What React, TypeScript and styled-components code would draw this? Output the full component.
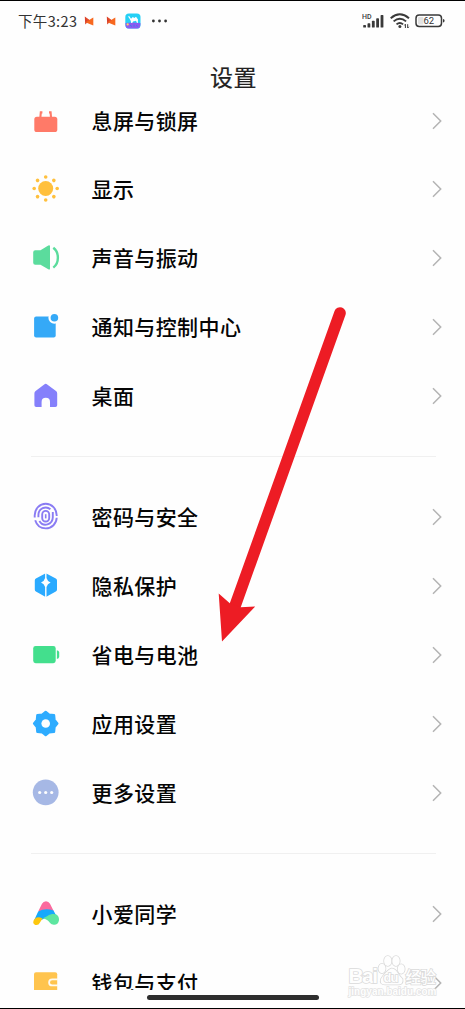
import React from 'react';
import styled, { createGlobalStyle } from 'styled-components';

const GlobalStyle = createGlobalStyle`
  * { box-sizing: border-box; }
  body { margin: 0; background: #fefefe; }
`;

const Screen = styled.div`
  position: relative;
  display: flex;
  flex-direction: column;
  width: 465px;
  height: 1009px;
  overflow: hidden;
  background: #fefefe;
  border-top: 1px solid #000;
  border-bottom: 1px solid #000;
  font-family: 'Noto Sans CJK SC', 'Liberation Sans', sans-serif;
  color: #050505;
`;

const StatusBar = styled.header`
  display: flex;
  align-items: center;
  justify-content: space-between;
  flex: none;
  height: 40px;
  padding: 0 20px 0 18px;
`;

const StatusGroup = styled.div<{ $gap: number }>`
  display: flex;
  align-items: center;
  gap: ${(p) => p.$gap}px;
`;

const Clock = styled.span`
  width: 60px;
  font-size: 14.5px;
  line-height: 20px;
  letter-spacing: 0.35px;
  white-space: nowrap;
  color: #333;
`;

const Title = styled.h1`
  flex: none;
  height: 70px;
  margin: 0;
  padding: 18px 0 0 2px;
  font-size: 23px;
  line-height: 34px;
  font-weight: 400;
  letter-spacing: 0.6px;
  text-align: center;
  color: #222;
  -webkit-text-stroke: 0.2px #222;
`;

const Viewport = styled.main`
  flex: none;
  height: 879px;
  overflow: hidden;
`;

const Group = styled.section<{ $first?: boolean }>`
  margin-top: ${(p) => (p.$first ? '-24.9px' : '0')};
`;

const Row = styled.div`
  display: flex;
  align-items: center;
  height: 68.9px;
  padding: 0 22px 0 31px;
`;

const Label = styled.span`
  flex: 1;
  margin-left: 30.5px;
  padding-bottom: 2px;
  font-size: 21px;
  line-height: 30px;
  font-weight: 500;
  letter-spacing: 0.4px;
`;

const Divider = styled.hr`
  height: 1px;
  margin: 25.3px 29px 26px 31px;
  border: 0;
  background: #f0f0f0;
`;

const HomeBar = styled.div`
  position: absolute;
  left: 147px;
  bottom: 8px;
  width: 172px;
  height: 5px;
  border-radius: 3px;
  background: #2e2e2e;
`;

const ArrowOverlay = styled.svg`
  position: absolute;
  left: 210px;
  top: 299px;
`;

const Watermark = styled.svg`
  position: absolute;
  left: 340px;
  top: 949px;
`;

const Icon = ({ children }: { children: React.ReactNode }) => (
  <svg width="30" height="30" viewBox="0 0 30 30" fill="none">
    {children}
  </svg>
);

const Chevron = () => (
  <svg width="12" height="18" viewBox="0 0 12 18" fill="none">
    <path d="M2 1.2 9.7 9 2 16.8" stroke="#b4b4b4" strokeWidth="1.5" />
  </svg>
);

const icons = {
  lock: (
    <Icon>
      <rect x="3.3" y="10.8" width="23" height="15.2" rx="2.6" fill="#ff7a68" />
      <path d="M11.4 6.4H9.8L9.4 11M18 6.4H19.6L20 11" stroke="#ff7a68" strokeWidth="2.1" />
    </Icon>
  ),
  sun: (
    <Icon>
      <g fill="#ffc03d">
        <circle cx="14.7" cy="14.5" r="7.5" />
        {[0, 45, 90, 135, 180, 225, 270, 315].map((a) => (
          <circle key={a} cx="14.7" cy="3" r="1.8" transform={`rotate(${a} 14.7 14.5)`} />
        ))}
      </g>
    </Icon>
  ),
  sound: (
    <Icon>
      <path d="M4.2 7.2H9.5L17.3 2.6Q19 1.8 19 3.6V25.4Q19 27.2 17.3 26.3L9.5 21.8H4.2Q2.2 21.8 2.2 19.8V9.2Q2.2 7.2 4.2 7.2Z" fill="#5bdc9d" />
      <path d="M22.3 4.8C28.4 9.4 28.4 20 22.3 24.6" stroke="#5bdc9d" strokeWidth="2.4" />
    </Icon>
  ),
  notice: (
    <Icon>
      <rect x="3.1" y="4.6" width="21.6" height="21" rx="2" fill="#35a9f7" />
      <circle cx="23.4" cy="5.8" r="6" fill="#fefefe" />
      <circle cx="23.4" cy="5.8" r="3.8" fill="#35a9f7" />
    </Icon>
  ),
  home: (
    <Icon>
      <path d="M13.2 3.4Q14.7 2.2 16.2 3.4L25 10Q26.2 11 26.2 12.4V24.2Q26.2 26 24.4 26H19V21Q19 16.8 14.8 16.8T10.6 21V26H5.2Q3.4 26 3.4 24.2V12.4Q3.4 11 4.6 10Z" fill="#8580fb" />
    </Icon>
  ),
  finger: (
    <Icon>
      <g stroke="#8a7cf3" strokeWidth="1.9">
        <path d="M3.7 15.5V13.2A11 11.4 0 0 1 25.7 13.2V14" />
        <path d="M4.2 18.2C6 24 10 26.4 14.7 26.4C21 26.4 25.5 21.5 25.7 15.8" />
        <path d="M7.4 15.2V13A7.3 7.6 0 0 1 19.4 7.3" />
        <path d="M21.8 10V15.3A7.2 7.4 0 0 1 8.4 19" />
        <rect x="11.2" y="8.9" width="7" height="10.6" rx="3.5" />
        <path d="M14.7 12.2V16.4" strokeWidth="1.6" />
      </g>
    </Icon>
  ),
  privacy: (
    <Icon>
      <path d="M13.8 2.8Q14.8 2.2 15.8 2.8L24.8 7.4Q26 8.1 26 9.4V18.6Q26 20 24.8 20.6L15.8 25.4Q14.8 26 13.8 25.4L4.9 20.6Q3.8 20 3.8 18.6V9.4Q3.8 8.1 4.9 7.4Z" fill="#2aaaff" />
      <path d="M14.1 1.8H15.5V7Q16.4 10.4 19.6 11.6Q16.4 12.8 15.5 16V26.5H14.1V16Q13.2 12.8 10 11.6Q13.2 10.4 14.1 7Z" fill="#fefefe" />
    </Icon>
  ),
  battery: (
    <Icon>
      <rect x="2.2" y="6" width="22.5" height="17.2" rx="2.4" fill="#43df8d" />
      <path d="M25.9 10.2Q28.2 10.6 28.2 12.5V16.7Q28.2 18.6 25.9 19Z" fill="#43df8d" />
    </Icon>
  ),
  gear: (
    <Icon>
      <path
        d="M14.7 2.9 18.1 5.7 23 6.2 23.5 11.1 26.3 14.5 23.5 17.9 23 22.8 18.1 23.3 14.7 26.1 11.3 23.3 6.4 22.8 5.9 17.9 3.1 14.5 5.9 11.1 6.4 6.2 11.3 5.7Z"
        fill="#2eacff"
        stroke="#2eacff"
        strokeWidth="2.4"
        strokeLinejoin="round"
      />
      <circle cx="14.7" cy="14.5" r="4.3" fill="#fefefe" />
    </Icon>
  ),
  more: (
    <Icon>
      <circle cx="14.7" cy="14.3" r="12.9" fill="#a6b8e5" />
      <g fill="#fefefe">
        <circle cx="8.7" cy="14.5" r="1.6" />
        <circle cx="14.7" cy="14.5" r="1.6" />
        <circle cx="20.7" cy="14.5" r="1.6" />
      </g>
    </Icon>
  ),
  assistant: (
    <Icon>
      <path d="M7.2 12.4 11 4.8Q12.3 2.2 15 2.2T19 4.8L22.9 12.4Z" fill="#fb6a9d" />
      <path d="M3 21.5 7.2 12.4Q14.7 8.6 22.5 11.6L27 20Q20 24 15.2 18.8L8 22Z" fill="#15a9fb" />
      <path d="M11.5 19.4Q7 17.2 4.2 19.4Q2.2 21.2 2.2 23.2Q2.6 26 5.6 26Q7.8 26 8.8 23.8Z" fill="#fdc70d" />
      <path d="M11.5 19.4C17.5 17.2 17.8 15 22.6 15C26.6 15 28.3 18 28 21.2C27.5 25 24.6 26.4 21.9 25.6C18.6 24.8 17.3 19.5 11.5 19.4Z" fill="#5de6a0" />
    </Icon>
  ),
  wallet: (
    <Icon>
      <rect x="3" y="4.2" width="23.2" height="21" rx="2" fill="#ffc44e" />
      <path d="M27 11.4H21.3Q18.1 11.4 18.1 14.4T21.3 17.4H27" stroke="#fffaf0" strokeWidth="1.8" />
    </Icon>
  ),
};

type Item = { icon: keyof typeof icons; label: string };

const groups: Item[][] = [
  [
    { icon: 'lock', label: '息屏与锁屏' },
    { icon: 'sun', label: '显示' },
    { icon: 'sound', label: '声音与振动' },
    { icon: 'notice', label: '通知与控制中心' },
    { icon: 'home', label: '桌面' },
  ],
  [
    { icon: 'finger', label: '密码与安全' },
    { icon: 'privacy', label: '隐私保护' },
    { icon: 'battery', label: '省电与电池' },
    { icon: 'gear', label: '应用设置' },
    { icon: 'more', label: '更多设置' },
  ],
  [
    { icon: 'assistant', label: '小爱同学' },
    { icon: 'wallet', label: '钱包与支付' },
  ],
];

const FlagIcon = () => (
  <svg width="10" height="10" viewBox="0 0 10 10">
    <path d="M.8.6 5.6 4.2 1.2 8.4Z" fill="#d8402c" />
    <path d="M9.3 1.4V9.4L1.4 6.3Z" fill="#f7681f" />
    <path d="M1 1 5.6 4.2 3.8 5.6Z" fill="#e8502a" />
  </svg>
);

const CamelIcon = () => (
  <svg width="16" height="16" viewBox="0 0 16 16">
    <rect x=".3" y=".5" width="15.2" height="15" rx="3.6" fill="#25d0f5" />
    <path d="M.5 10Q8 8.8 15.4 10V12Q15 15.5 12 15.5H4Q.8 15.5.5 12Z" fill="#8c5cf0" />
    <path d="M2.8 3.6 4.4 3.2 6 5.8 7.8 4 9.3 5 11 3.8 13 6.6 12.8 10H12L11 7.8 8 8.4 7.2 10H6.2L5.7 7.8 4 4.8Z" fill="#fff" />
    <circle cx="2.7" cy="11.4" r="1.1" fill="#ffd65a" />
    <path d="M5 12 7 13.6M9 11.6V13.6M11.6 12 12.4 13.6" stroke="#3b7cf2" strokeWidth="1" />
  </svg>
);

const SignalIcon = () => (
  <svg width="23" height="16" viewBox="0 0 23 16" fill="#3a3a3a">
    <text x="0" y="6" fontFamily="Roboto, sans-serif" fontSize="7" fontWeight="500">HD</text>
    <rect x="1.2" y="12" width="2.8" height="2.6" rx=".7" />
    <rect x="5.5" y="10.2" width="2.8" height="4.4" rx=".7" />
    <rect x="9.9" y="7.8" width="2.8" height="6.8" rx=".7" />
    <rect x="14.2" y="5.2" width="2.8" height="9.4" rx=".7" />
    <rect x="18.6" y="2" width="2.8" height="12.6" rx=".7" />
  </svg>
);

const WifiIcon = () => (
  <svg width="20" height="16" viewBox="0 0 20 16" fill="none">
    <g stroke="#3a3a3a" strokeWidth="1.9">
      <path d="M.7 5.2Q9.8-2.6 19 5.2" />
      <path d="M3.6 8.4Q9.8 3 16.1 8.4" />
      <path d="M6.5 11.4Q9.8 8.4 13.1 11.4" />
    </g>
    <circle cx="9.9" cy="13.4" r="1.5" fill="#3a3a3a" />
    <path d="M15.4 11.2V15M14.4 12.4 15.4 11.2M17.7 11.2V15M17.7 15 18.8 13.8" stroke="#3a3a3a" strokeWidth="1" />
  </svg>
);

const BatteryIcon = () => (
  <svg width="30" height="14" viewBox="0 0 30 14" fill="none">
    <rect x="1" y="1" width="25.5" height="11.5" rx="3.2" stroke="#3a3a3a" strokeWidth="1.5" />
    <rect x="3" y="3" width="5.5" height="7.5" rx="1" fill="#e2e2e2" />
    <path d="M28 5Q29.6 5.3 29.6 6.8T28 8.6Z" fill="#3a3a3a" />
    <text x="13.8" y="10.2" textAnchor="middle" fontFamily="Roboto, sans-serif" fontSize="9.5" fill="#333">62</text>
  </svg>
);

const MoreDots = () => (
  <svg width="18" height="6" viewBox="0 0 18 6" fill="#333">
    <circle cx="2.4" cy="3" r="1.4" />
    <circle cx="8.5" cy="3" r="1.4" />
    <circle cx="14.6" cy="3" r="1.4" />
  </svg>
);

export default function App() {
  return (
    <>
      <GlobalStyle />
      <Screen>
        <StatusBar>
          <StatusGroup $gap={9.5}>
            <StatusGroup $gap={11.5}>
              <StatusGroup $gap={6}>
                <Clock>下午3:23</Clock>
                <FlagIcon />
              </StatusGroup>
              <FlagIcon />
            </StatusGroup>
            <StatusGroup $gap={10}>
              <CamelIcon />
              <MoreDots />
            </StatusGroup>
          </StatusGroup>
          <StatusGroup $gap={4.8}>
            <SignalIcon />
            <WifiIcon />
            <BatteryIcon />
          </StatusGroup>
        </StatusBar>
        <Title>设置</Title>
        <Viewport>
          {groups.map((items, i) => (
            <React.Fragment key={i}>
              {i > 0 && <Divider />}
              <Group $first={i === 0}>
                {items.map((item) => (
                  <Row key={item.label}>
                    {icons[item.icon]}
                    <Label>{item.label}</Label>
                    <Chevron />
                  </Row>
                ))}
              </Group>
            </React.Fragment>
          ))}
        </Viewport>
        <HomeBar />
        <Watermark width="105" height="56" viewBox="0 0 105 56">
          <g fill="#fefefe" stroke="#dadada" strokeWidth="1.6" fontFamily="'Liberation Sans', 'Noto Sans CJK SC', sans-serif" fontWeight="700" paintOrder="stroke">
            <text x="8.5" y="33" fontSize="21" textLength="29.5">Bai</text>
            <ellipse cx="42" cy="18.5" rx="3.5" ry="4.7" />
            <ellipse cx="47.8" cy="11" rx="3.7" ry="5" />
            <ellipse cx="56" cy="11" rx="3.7" ry="5" />
            <ellipse cx="61.2" cy="19" rx="3.5" ry="4.7" />
            <path d="M51.5 18.5Q55 18.5 57 22T62.5 29Q63.5 34.5 58 34.5H45Q39.5 34.5 41 29Q42.5 26 46 22.5T51.5 18.5Z" />
            <text x="43.5" y="32" fontSize="13" textLength="15">du</text>
            <text x="65.5" y="32.5" fontSize="15.5" textLength="30.5" fontWeight="500">经验</text>
            <text x="8.5" y="44.5" fontSize="10" textLength="88" stroke="#e2e2e2" strokeWidth="1.4">jingyan.baidu.com</text>
          </g>
        </Watermark>
        <ArrowOverlay width="140" height="350" viewBox="210 300 140 350">
          <path d="M340 313 235 606" stroke="#ed1c24" strokeWidth="11.6" strokeLinecap="round" />
          <path d="M218.7 593.5 229.8 603.2 240.6 607.2 255.2 606.5 222 641.5Z" fill="#ed1c24" />
        </ArrowOverlay>
      </Screen>
    </>
  );
}
